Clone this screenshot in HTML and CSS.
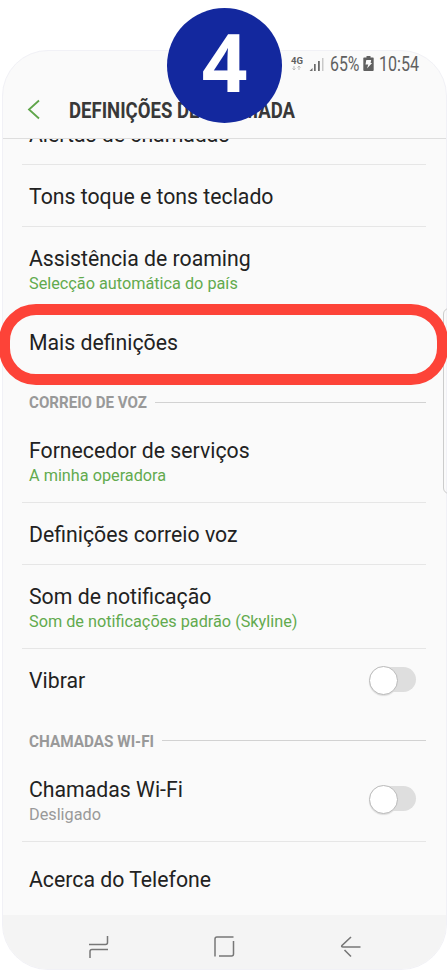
FILE: index.html
```html
<!DOCTYPE html>
<html lang="pt">
<head>
<meta charset="utf-8">
<title>Definições de chamada</title>
<link rel="stylesheet" href="styles.css">
</head>
<body>
<main class="phone">
  <div class="status">
    <svg class="network" width="38" height="22" viewBox="0 0 38 22">
      <text class="network-label" x="1" y="11" textLength="12" lengthAdjust="spacingAndGlyphs">4G</text>
      <path d="M4 13v4M2.500 15.500L4 17l1.500-1.500M9 17v-4M7.500 14.500L9 13l1.500 1.500" fill="none" stroke="#bbb"/>
      <path d="M19.500 18h3v-3zM24 11h1.700v7H24zM28 8h1.800v10H28z" fill="#6b6b6b"/>
      <path d="M32 5h1.500v13H32z" fill="#c9c9c9"/>
    </svg>
    <svg width="30" height="22" viewBox="0 0 30 22"><text class="status-text" x="0" y="18" textLength="29.500" lengthAdjust="spacingAndGlyphs">65%</text></svg>
    <svg class="battery" width="11" height="22" viewBox="0 0 11 22">
      <path d="M3.500 3h4v1.500H10a.7.700 0 0 1 .7.700V17a.9.900 0 0 1-.9.900H1.200a.9.900 0 0 1-.9-.9V5.200a.7.700 0 0 1 .7-.7h2.500z" fill="#606060"/>
      <path d="M3.300 7h4.900L7.600 10h1.500L4 15.500 5.300 11.500H2.500z" fill="#fafafa"/>
    </svg>
    <svg width="42" height="22" viewBox="0 0 42 22"><text class="status-text" x="2" y="18" textLength="40" lengthAdjust="spacingAndGlyphs">10:54</text></svg>
  </div>
  <header class="header">
    <svg width="14" height="22" viewBox="0 0 14 22"><path d="M12 1.500L2 10.500l10 9" fill="none" stroke="#5fa54a" stroke-width="1.800"/></svg>
    <svg class="heading" width="230" height="28" viewBox="0 0 230 28"><text class="heading-text" x="0" y="21.500" textLength="226" lengthAdjust="spacingAndGlyphs">DEFINIÇÕES DE CHAMADA</text></svg>
  </header>
  <div class="list">
    <div class="row clipped"><div class="title alerts">Alertas de chamadas</div></div>
    <div class="row"><div class="title">Tons toque e tons teclado</div></div>
    <div class="row tall"><div class="title">Assistência de roaming</div><div class="sub">Selecção automática do país</div></div>
    <div class="row last"><div class="title">Mais definições</div></div>
    <div class="section">
      <svg width="120" height="22" viewBox="0 0 120 22"><text class="section-text" x="0" y="16.300" textLength="118" lengthAdjust="spacingAndGlyphs">CORREIO DE VOZ</text></svg>
      <span class="rule"></span>
    </div>
    <div class="row tall"><div class="title">Fornecedor de serviços</div><div class="sub">A minha operadora</div></div>
    <div class="row"><div class="title">Definições correio voz</div></div>
    <div class="row tall"><div class="title">Som de notificação</div><div class="sub">Som de notificações padrão (Skyline)</div></div>
    <div class="row last split"><div class="title">Vibrar</div><span class="switch"></span></div>
    <div class="section wifi">
      <svg width="127" height="22" viewBox="0 0 127 22"><text class="section-text" x="0" y="17" textLength="125" lengthAdjust="spacingAndGlyphs">CHAMADAS WI-FI</text></svg>
      <span class="rule"></span>
    </div>
    <div class="row tall split"><div><div class="title">Chamadas Wi-Fi</div><div class="sub off">Desligado</div></div><span class="switch low"></span></div>
    <div class="row last about"><div class="title">Acerca do Telefone</div></div>
  </div>
  <nav class="nav">
    <svg width="22" height="24" viewBox="0 0 22 24"><path d="M2 9.500h16.500a2 2 0 0 0 2-2V1M21 14.500H5a2 2 0 0 0-2 2V23" fill="none" stroke="#777" stroke-width="1.500"/></svg>
    <svg width="22" height="24" viewBox="0 0 22 24"><path d="M2 21.500V4a2 2 0 0 1 2-2H20.500M20.500 6V19a2 2 0 0 1-2 2H6" fill="none" stroke="#777" stroke-width="1.500"/></svg>
    <svg width="22" height="24" viewBox="0 0 22 24"><path d="M12 2L3 10.500Q2 12 4 12H21.500M5.500 15L12 21.500" fill="none" stroke="#777" stroke-width="1.600"/></svg>
  </nav>
</main>
<div class="side-key"></div>
<div class="ring"></div>
<div class="badge">4</div>
</body>
</html>
```
FILE: styles.css
```css
* { box-sizing: border-box; }
body {
  margin: 0;
  padding: 50px 0 0 2px;
  height: 970px;
  position: relative;
  overflow: hidden;
  background: #fff;
  font-family: Roboto, "Liberation Sans", sans-serif;
  color: #222;
}
svg { display: block; flex: none; overflow: visible; }
.phone {
  height: 920px;
  display: flex;
  flex-direction: column;
  overflow: hidden;
  border: 1px solid #f1f1f6;
  border-radius: 46px;
  background: #fafafa;
}
.status {
  height: 36px;
  padding: 2px 26px 0 287px;
  display: flex;
  align-items: flex-start;
}
.network { margin-right: 2px; }
.battery { margin: 0 3px; }
.network-label { font-size: 9px; font-weight: 700; fill: #606060; }
.status-text { font-size: 20px; fill: #606060; }
.header {
  height: 52px;
  padding: 0 0 5px 24px;
  display: flex;
  align-items: center;
  border-bottom: 1px solid #dedede;
}
.heading { margin-left: 28px; }
.heading-text { font-size: 21.5px; font-weight: 700; fill: #383838; }
.list { height: 776px; overflow: hidden; }
.row {
  height: 62px;
  margin: 0 20px 0 19px;
  padding: 19px 7px 0;
  border-bottom: 1px solid #e6e6e6;
}
.clipped { margin-top: -36px; }
.tall { height: 84px; }
.last { border-bottom-color: transparent; }
.about { padding-top: 25px; }
.title { font-size: 21.25px; line-height: 26px; white-space: nowrap; }
.sub { margin-top: 2px; font-size: 16.25px; line-height: 20px; color: #62aa4e; white-space: nowrap; }
.off { color: #999; }
.split { display: flex; justify-content: space-between; }
.section {
  height: 46px;
  margin: 0 20px 0 19px;
  padding: 19px 0 0 7px;
  display: flex;
}
.wifi { height: 47px; }
.section-text { font-size: 16.5px; font-weight: 700; fill: #999; }
.rule { flex: 1; height: 1px; margin: 10px 0 0 6px; background: #d2d2d2; }
.switch {
  width: 46px;
  height: 25px;
  margin: -1px 3px 0 0;
  border-radius: 13px;
  background: #dedede;
}
.switch::before {
  content: "";
  display: block;
  width: 27px;
  height: 27px;
  margin: -1px 0 0 -1px;
  border: 1px solid #b9b9b9;
  border-radius: 50%;
  background: #fff;
  box-shadow: 0 1px 1px #ddd;
}
.low { margin-top: 9px; }
.nav {
  flex: 1;
  padding: 9px 85px 0 84px;
  display: flex;
  align-items: center;
  justify-content: space-between;
  background: #f4f4f4;
}
.side-key {
  position: absolute;
  left: 443px;
  top: 308px;
  width: 12px;
  height: 186px;
  border: 1px solid #ccc;
  border-radius: 7px;
}
.ring {
  position: absolute;
  left: -1px;
  top: 304px;
  width: 449px;
  height: 81px;
  border: 11px solid #fd4338;
  border-radius: 37px;
}
.badge {
  position: absolute;
  left: 167px;
  top: 8px;
  width: 115px;
  height: 115px;
  border-radius: 50%;
  background: #13289e;
  color: #fff;
  font: 700 80px/106px "Open Sans", sans-serif;
  text-align: center;
}
```
